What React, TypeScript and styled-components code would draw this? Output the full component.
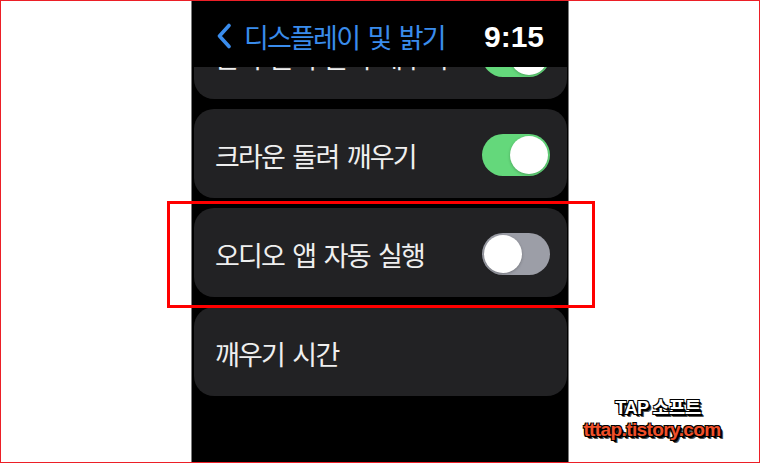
import styled, { createGlobalStyle } from 'styled-components';

const GlobalStyle = createGlobalStyle`
  html, body {
    margin: 0;
    padding: 0;
    background: #fff;
  }
  * {
    box-sizing: border-box;
  }
`;

const KR_FONT = `"Noto Sans CJK KR", "Noto Sans", sans-serif`;

type Row = {
  label: string;
  toggle?: 'on' | 'off';
};

const rows: Row[] = [
  { label: '손목 들어 올려 깨우기', toggle: 'on' },
  { label: '크라운 돌려 깨우기', toggle: 'on' },
  { label: '오디오 앱 자동 실행', toggle: 'off' },
  { label: '깨우기 시간' },
];

const App = (): JSX.Element => {
  return (
    <>
      <GlobalStyle />
      <Frame>
        <Screen>
          <Header>
            <Back>
              <svg width="16" height="26" viewBox="0 0 16 26">
                <path
                  d="M13 2.5 L3.5 13 L13 23.5"
                  fill="none"
                  stroke="#3a8cec"
                  strokeWidth="3.6"
                  strokeLinecap="round"
                  strokeLinejoin="round"
                />
              </svg>
              <Title>디스플레이 및 밝기</Title>
            </Back>
            <Clock>9:15</Clock>
          </Header>
          <List>
            {rows.map((row) => (
              <Card key={row.label}>
                <Label>{row.label}</Label>
                {row.toggle && (
                  <Toggle $on={row.toggle === 'on'}>
                    <Knob $on={row.toggle === 'on'} />
                  </Toggle>
                )}
              </Card>
            ))}
          </List>
        </Screen>
        <Highlight />
        <Watermark>
          <Brand>TAP 소프트</Brand>
          <Site>tttap.tistory.com</Site>
        </Watermark>
      </Frame>
    </>
  );
};

export default App;

const Frame = styled.div`
  position: relative;
  width: 760px;
  height: 463px;
  border: 1px solid #ec1f27;
  background: #fff;
  display: flex;
  justify-content: center;
  overflow: hidden;
`;

const Screen = styled.div`
  width: 378px;
  height: 100%;
  background: #000;
  border-left: 1px solid #7c7c7c;
  border-right: 1px solid #7c7c7c;
  display: flex;
  flex-direction: column;
`;

const Header = styled.div`
  height: 66px;
  flex-shrink: 0;
  display: flex;
  align-items: center;
  justify-content: space-between;
  padding: 5px 24px 0 24px;
  background: #000;
`;

const Back = styled.div`
  display: flex;
  align-items: center;
  gap: 12px;

  & > svg {
    flex-shrink: 0;
    margin-top: -1px;
  }
`;

const Title = styled.span`
  color: #3a8cec;
  font-family: ${KR_FONT};
  font-size: 27px;
  letter-spacing: -1.8px;
  word-spacing: 4px;
  line-height: 1;
`;

const Clock = styled.span`
  color: #fff;
  font-family: "Liberation Sans", Arial, sans-serif;
  font-weight: 700;
  font-size: 30px;
  line-height: 1;
`;

const List = styled.div`
  flex: 1;
  overflow: hidden;
  display: flex;
  flex-direction: column;
  gap: 10px;
  padding: 0 1px 0 2px;

  & > :first-child {
    margin-top: -57px;
  }
`;

const Card = styled.div`
  height: 89px;
  flex-shrink: 0;
  border-radius: 20px;
  background: #222224;
  display: flex;
  align-items: center;
  justify-content: space-between;
  padding: 3px 17px 0 21px;
`;

const Label = styled.span`
  color: #efefef;
  font-family: ${KR_FONT};
  font-size: 27px;
  letter-spacing: -1.8px;
  word-spacing: 4px;
  line-height: 1;
`;

const Toggle = styled.div<{ $on: boolean }>`
  width: 68px;
  height: 42px;
  border-radius: 21px;
  background: ${(p) => (p.$on ? '#64d87b' : '#9c9ea7')};
  padding: 2px;
  display: flex;
  justify-content: ${(p) => (p.$on ? 'flex-end' : 'flex-start')};
`;

const Knob = styled.div<{ $on: boolean }>`
  width: 38px;
  height: 38px;
  border-radius: 50%;
  background: #fff;
  box-shadow: 0 1px 3px rgba(0, 0, 0, 0.25);
`;

const Highlight = styled.div`
  position: absolute;
  left: 166px;
  top: 200px;
  width: 428px;
  height: 107px;
  border: 3px solid #ff0000;
  pointer-events: none;
`;

const Watermark = styled.div`
  position: absolute;
  left: 576px;
  top: 398px;
  width: 150px;
  display: flex;
  flex-direction: column;
  align-items: center;
  gap: 3px;
  font-family: "Liberation Sans", ${KR_FONT};
  font-weight: 700;
  line-height: 1;
`;

const Brand = styled.span`
  color: #fff;
  font-size: 18px;
  letter-spacing: -0.5px;
  margin-left: 12px;
  text-shadow: -1px -1px 0 #000, 1px -1px 0 #000, -1px 1px 0 #000, 1px 1px 0 #000, 2px 2px 0 #000, 3px 3px 0 #555;
`;

const Site = styled.span`
  color: #f2502a;
  font-size: 19px;
  letter-spacing: -0.6px;
  text-shadow: -1px -1px 0 #000, 1px -1px 0 #000, -1px 1px 0 #000, 1px 1px 0 #000, 2px 2px 0 #000, 3px 3px 0 #555;
`;
